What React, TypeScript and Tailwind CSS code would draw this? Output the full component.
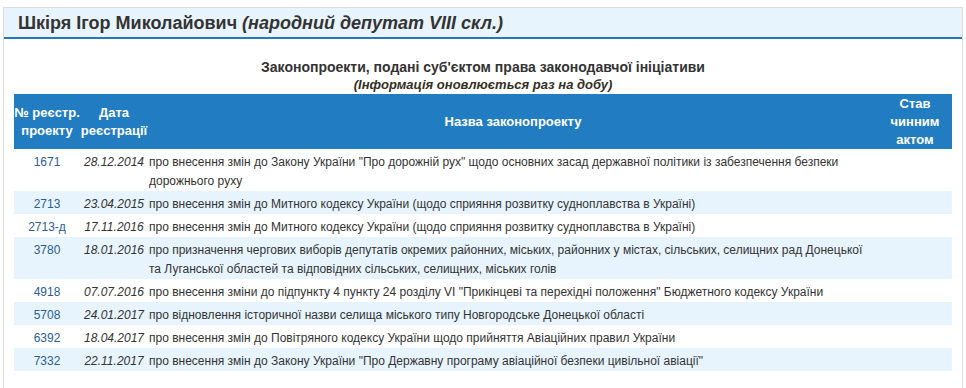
// Bills submitted by a deputy: header panel + registry table

const bills = [
  { num: "1671", date: "28.12.2014", title: "про внесення змін до Закону України \"Про дорожній рух\" щодо основних засад державної політики із забезпечення безпеки дорожнього руху" },
  { num: "2713", date: "23.04.2015", title: "про внесення змін до Митного кодексу України (щодо сприяння розвитку судноплавства в Україні)" },
  { num: "2713-д", date: "17.11.2016", title: "про внесення змін до Митного кодексу України (щодо сприяння розвитку судноплавства в Україні)" },
  { num: "3780", date: "18.01.2016", title: "про призначення чергових виборів депутатів окремих районних, міських, районних у містах, сільських, селищних рад Донецької та Луганської областей та відповідних сільських, селищних, міських голів" },
  { num: "4918", date: "07.07.2016", title: "про внесення зміни до підпункту 4 пункту 24 розділу VI \"Прикінцеві та перехідні положення\" Бюджетного кодексу України" },
  { num: "5708", date: "24.01.2017", title: "про відновлення історичної назви селища міського типу Новгородське Донецької області" },
  { num: "6392", date: "18.04.2017", title: "про внесення змін до Повітряного кодексу України щодо прийняття Авіаційних правил України" },
  { num: "7332", date: "22.11.2017", title: "про внесення змін до Закону України \"Про Державну програму авіаційної безпеки цивільної авіації\"" },
];

export default function App() {
  return (
    <div className="bg-white min-h-[388px] pt-[7px] pl-[3px] font-['Liberation_Sans',Arial,sans-serif]">
      <div className="w-[960px] border border-[#dcdcdc] pb-[40px]">
        {/* Deputy name bar */}
        <div className="h-[31px] bg-[#e8f4fd] border-b-[2px] border-[#2a76b4] pl-[14px] flex items-end">
          <h1 className="text-[18px] leading-[20px] font-bold text-[#333] pb-[4px]">
            Шкіря Ігор Миколайович <i>(народний депутат VIII скл.)</i>
          </h1>
        </div>

        <div className="pt-[19px] text-center">
          <div className="text-[14px] leading-[18px] font-bold text-[#333]">
            Законопроекти, подані суб'єктом права законодавчої ініціативи
          </div>
          <div className="text-[13px] leading-[17px] font-bold italic text-[#33301f]">
            (Інформація оновлюється раз на добу)
          </div>
        </div>

        <table className="mx-[10px] mt-[1px] w-[938px] border-collapse">
          <colgroup>
            <col className="w-[66px]" />
            <col className="w-[68px]" />
            <col />
            <col className="w-[74px]" />
          </colgroup>
          <thead>
            <tr className="bg-[#217cc2] text-white text-[13px] font-bold leading-[18px] h-[55px]">
              <th className="align-middle text-center font-bold">№ реєстр. проекту</th>
              <th className="align-middle text-center font-bold">Дата реєстрації</th>
              <th className="align-middle text-center font-bold">Назва законопроекту</th>
              <th className="align-middle text-center font-bold">Став чинним актом</th>
            </tr>
          </thead>
          <tbody className="text-[12px]">
            {bills.map((b, i) => (
              <tr key={b.num} className={i % 2 === 1 ? "bg-[#e8f4fd]" : ""}>
                <td className="align-top text-center pt-[4px] leading-[19px] text-[#2b5e94]">{b.num}</td>
                <td className="align-top text-center pt-[4px] leading-[19px] italic text-[#333]">{b.date}</td>
                <td className="align-top text-left pt-[4px] pl-[1px] pr-[14px] leading-[19px] text-[#333]">{b.title}</td>
                <td className="pt-[4px]"></td>
              </tr>
            ))}
          </tbody>
        </table>
      </div>
    </div>
  );
}
